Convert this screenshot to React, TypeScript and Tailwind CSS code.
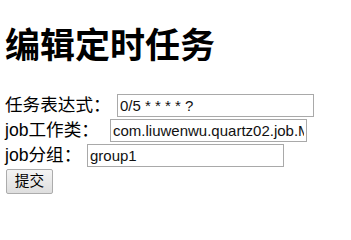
const FONT = "font-['Liberation_Sans','Noto_Sans_CJK_SC',sans-serif]";

function Row({ label, labelWidth, value }: { label: string; labelWidth: string; value: string }) {
  return (
    <div className="flex h-[25px] items-center">
      <span className={`${labelWidth} shrink-0 text-[17.6px] leading-[25px] text-black`}>{label}</span>
      <input
        type="text"
        defaultValue={value}
        className="h-[23px] w-[197px] border border-[#a9a9a9] bg-white px-[2px] text-[15px] text-[#111] outline-none"
      />
    </div>
  );
}

export default function App() {
  return (
    <div className={`${FONT} min-h-[213px] w-[351px] bg-white pl-[5px] text-black`}>
      <h1 className="pt-[20px] text-[35px] font-bold leading-[51px]">编辑定时任务</h1>
      <form className="mt-[22px] flex flex-col">
        <Row label="任务表达式：" labelWidth="w-[112px]" value="0/5 * * * * ?" />
        <Row label="job工作类：" labelWidth="w-[105px]" value="com.liuwenwu.quartz02.job.MyJob" />
        <Row label="job分组：" labelWidth="w-[82px]" value="group1" />
        <div className="mt-[1px]">
          <button
            type="button"
            className="ml-[1px] h-[25px] w-[47px] rounded-[2px] border border-[#acacac] bg-gradient-to-b from-[#f4f4f4] to-[#dedede] text-[14.67px] leading-[23px] text-black"
          >
            提交
          </button>
        </div>
      </form>
    </div>
  );
}
